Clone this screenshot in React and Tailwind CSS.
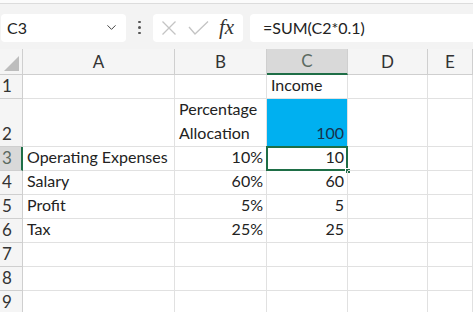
import { ChevronDown } from 'lucide-react';

const cols = ['A', 'B', 'C', 'D', 'E'];

const rows = [
  { n: 1, h: 'h-[24px]', cells: ['', '', 'Income', '', ''] },
  { n: 2, h: 'h-[48px]', cells: ['', 'Percentage\nAllocation', '100', '', ''] },
  { n: 3, h: 'h-[24px]', cells: ['Operating Expenses', '10%', '10', '', ''] },
  { n: 4, h: 'h-[24px]', cells: ['Salary', '60%', '60', '', ''] },
  { n: 5, h: 'h-[24px]', cells: ['Profit', '5%', '5', '', ''] },
  { n: 6, h: 'h-[24px]', cells: ['Tax', '25%', '25', '', ''] },
  { n: 7, h: 'h-[24px]', cells: ['', '', '', '', ''] },
  { n: 8, h: 'h-[24px]', cells: ['', '', '', '', ''] },
  { n: 9, h: 'h-[24px]', cells: ['', '', '', '', ''] },
];

// numbers & percentages sit on the right, like Excel
const isNum = (v) => /^[0-9.]+%?$/.test(v);

const Toolbar = () => (
  <div className="h-[49px] bg-[#f3f3f3] border-t-[3px] border-[#fbfbfb] shadow-[inset_0_1px_0_#dcdcdc] flex items-center pl-[1px] pt-[8px] pb-[5px]">
    <div className="w-[125px] h-[28px] bg-white rounded-[4px] flex items-center justify-between pl-[6px] pr-[7px]">
      <span className="text-[16px] text-[#222]">C3</span>
      <ChevronDown size={15} strokeWidth={1.6} className="text-[#444]" />
    </div>
    <div className="w-[27px] flex flex-col items-center gap-[3px]">
      <span className="w-[2.5px] h-[2.5px] bg-[#555] rounded-full" />
      <span className="w-[2.5px] h-[2.5px] bg-[#555] rounded-full" />
      <span className="w-[2.5px] h-[2.5px] bg-[#555] rounded-full" />
    </div>
    <div className="w-[90px] h-[28px] bg-white rounded-[4px] flex items-center pl-[8px]">
      <svg width="16" height="16" viewBox="0 0 16 16" className="mr-[11px]">
        <path d="M1.5 1.5 L14.5 14.5 M14.5 1.5 L1.5 14.5" stroke="#c4c4c4" strokeWidth="1.3" fill="none" />
      </svg>
      <svg width="21" height="16" viewBox="0 0 21 16" className="mr-[10px]">
        <path d="M1 7 L7 14 L20 1.5" stroke="#c4c4c4" strokeWidth="1.3" fill="none" />
      </svg>
      <span className="font-['Liberation_Serif',serif] italic text-[21px] text-[#333] leading-none">fx</span>
    </div>
    <div className="flex-1 ml-[7px] h-[28px] bg-white rounded-l-[4px] flex items-center pl-[13px]">
      <span className="text-[16px] text-[#222]">=SUM(C2*0.1)</span>
    </div>
  </div>
);

export default function App() {
  return (
    <div className="w-[473px] h-[312px] overflow-hidden bg-white font-['Lato',sans-serif] text-[#222]">
      <Toolbar />
      <div className="grid grid-cols-[23px_152px_92px_81px_80px_1fr]">
        {/* column header row */}
        <div className="h-[26px] bg-[#f5f5f5] border-r border-b border-[#cfcfcf] flex items-end justify-end pr-[3px] pb-[3px]">
          <div className="w-0 h-0 border-l-[15px] border-l-transparent border-b-[15px] border-b-[#bdbdbd]" />
        </div>
        {cols.map((c) => (
          <div
            key={c}
            className={
              c === 'C'
                ? 'h-[26px] bg-[#d9d9d9] border-r border-[#cfcfcf] border-b-2 border-b-[#1e6e46] flex items-center justify-center text-[17px] text-[#5b6a61]'
                : 'h-[26px] bg-[#f5f5f5] border-r border-b border-[#cfcfcf] flex items-center justify-center text-[17px] text-[#333]'
            }
          >
            {c}
          </div>
        ))}

        {rows.map((r) => (
          <div key={r.n} className="contents">
            <div
              className={
                r.n === 3
                  ? `${r.h} bg-[#d9d9d9] border-r-2 border-r-[#1e6e46] border-b border-b-[#cfcfcf] flex items-end pl-[2px] pb-[1px] text-[17px] leading-[22px] text-[#5b6a61]`
                  : `${r.h} bg-[#f5f5f5] border-r border-b border-[#cfcfcf] flex items-end pl-[2px] pb-[1px] text-[17px] leading-[22px] text-[#333]`
              }
            >
              {r.n}
            </div>
            {r.cells.map((v, i) => {
              const blue = r.n === 2 && i === 2;
              const sel = r.n === 3 && i === 2;
              return (
                <div
                  key={i}
                  className={`${r.h} relative border-r border-b border-[#e1e1e1] flex flex-col justify-end pb-[1px] text-[16px] leading-[24px] whitespace-pre-line ${
                    isNum(v) ? 'items-end pr-[3px]' : 'items-start pl-[4px]'
                  } ${blue ? 'bg-[#00b0f0] text-[#17324d]' : ''}`}
                >
                  {v}
                  {sel && (
                    <>
                      <div className="absolute -left-[1px] -top-[1px] -right-[1px] -bottom-[1px] border-2 border-[#1e6e46] pointer-events-none" />
                      <div className="absolute -right-[4px] -bottom-[4px] w-[6px] h-[6px] bg-[#1e6e46] border border-white" />
                    </>
                  )}
                </div>
              );
            })}
          </div>
        ))}
      </div>
    </div>
  );
}
